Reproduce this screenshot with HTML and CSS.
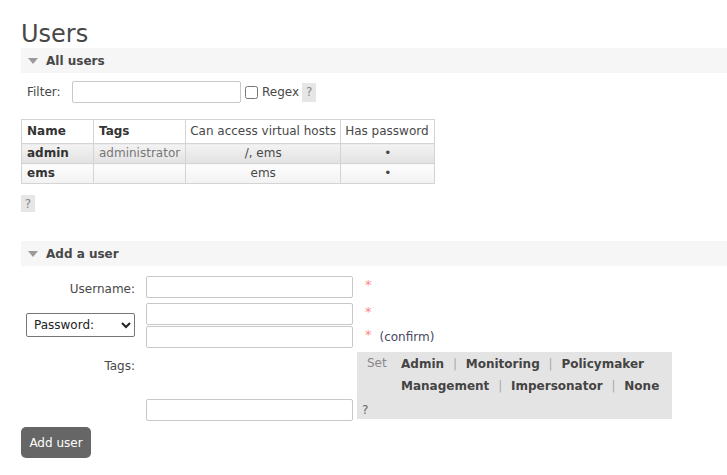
FILE: index.html
```html
<!DOCTYPE html>
<html>
<head>
<meta charset="utf-8">
<link rel="stylesheet" href="styles.css">
</head>
<body>
<div class="main">
  <h1 class="title">Users</h1>

  <div class="section-bar"><span class="tri"></span><span class="section-title">All users</span></div>

  <div class="filter-row">
    <label class="filter-label">Filter:</label>
    <input class="text-input filter-input" type="text">
    <input class="check" type="checkbox">
    <span class="regex">Regex</span>
    <span class="help help-tall">?</span>
  </div>

  <table class="users">
    <thead>
      <tr>
        <th class="c-name">Name</th>
        <th class="c-tags">Tags</th>
        <th class="c-vh plain">Can access virtual hosts</th>
        <th class="c-pw plain">Has password</th>
      </tr>
    </thead>
    <tbody>
      <tr class="alt1">
        <td class="strong">admin</td>
        <td class="muted">administrator</td>
        <td class="center">/, ems</td>
        <td class="center">&#8226;</td>
      </tr>
      <tr class="alt2">
        <td class="strong">ems</td>
        <td></td>
        <td class="center">ems</td>
        <td class="center">&#8226;</td>
      </tr>
    </tbody>
  </table>

  <div class="help-row"><span class="help help-small">?</span></div>

  <div class="section-bar add-bar"><span class="tri"></span><span class="section-title">Add a user</span></div>

  <form class="user-form">
    <label class="f-label user-label">Username:</label>
    <div class="f-field"><input class="text-input field-input" type="text"><span class="mand">*</span></div>

    <div class="f-label pw-label">
      <select class="pw-select"><option>Password:</option><option>No password</option></select>
    </div>
    <div class="f-field pw-fields">
      <div class="pw-line"><input class="text-input field-input" type="password"><span class="mand">*</span></div>
      <div class="pw-line"><input class="text-input field-input" type="password"><span class="mand">*</span><span class="confirm">(confirm)</span></div>
    </div>

    <label class="f-label tags-label">Tags:</label>
    <div class="tags-cell">
      <div class="tag-box">
        <span class="set">Set</span>
        <div class="tag-links">
          <span class="tag-link">Admin</span> <span class="sep">|</span> <span class="tag-link">Monitoring</span> <span class="sep">|</span> <span class="tag-link">Policymaker</span><br>
          <span class="tag-link">Management</span> <span class="sep">|</span> <span class="tag-link">Impersonator</span> <span class="sep">|</span> <span class="tag-link">None</span>
        </div>
      </div>
      <input class="text-input field-input tags-input" type="text">
      <span class="tags-help">?</span>
    </div>
  </form>

  <button class="add-btn" type="button">Add user</button>
</div>
</body>
</html>
```

FILE: styles.css
```css
html, body {
  margin: 0;
  padding: 0;
  background: #fff;
}
body {
  font-family: "DejaVu Sans", Verdana, sans-serif;
  font-size: 12px;
  color: #484848;
}
.main {
  padding: 20px 0 0 21px;
}
.title {
  margin: 0;
  font-size: 24px;
  font-weight: normal;
  line-height: 28px;
  color: #484848;
}
.section-bar {
  height: 25px;
  background: #f6f6f6;
  display: flex;
  align-items: center;
}
.tri {
  width: 0;
  height: 0;
  margin-left: 7px;
  margin-right: 8px;
  border-left: 5px solid transparent;
  border-right: 5px solid transparent;
  border-top: 6px solid #9a9a9a;
}
.section-title {
  font-weight: bold;
  color: #484848;
}
.filter-row {
  display: flex;
  align-items: center;
  margin-top: 8px;
  height: 22px;
}
.filter-label {
  margin-left: 6px;
  width: 45px;
}
.text-input {
  box-sizing: border-box;
  height: 22px;
  border: 1px solid #c8c8c8;
  border-radius: 2px;
  background: #fff;
  padding: 0 3px;
  font-family: inherit;
  font-size: 12px;
  margin: 0;
}
.filter-input {
  width: 169px;
}
.check {
  width: 13px;
  height: 13px;
  margin: 0 4px 0 4px;
}
.regex {
  margin-right: 3px;
}
.help {
  background: #e6e6e6;
  color: #888;
  display: inline-flex;
  align-items: center;
  justify-content: center;
  width: 14px;
}
.help-tall {
  height: 19px;
}
.users {
  margin-top: 16px;
  border-collapse: collapse;
  border: 1px solid #d4d4d4;
  table-layout: fixed;
}
.users th, .users td {
  border: 1px solid #d4d4d4;
  line-height: 15px;
  text-align: left;
  white-space: nowrap;
}
.users th {
  padding: 4px 5px;
  font-weight: bold;
  background: #fff;
  color: #333;
}
.users th.plain {
  font-weight: normal;
  color: #484848;
}
.users td {
  padding: 2px 5px;
}
.c-name { width: 61px; }
.c-tags { width: 79px; }
.users th.c-vh, .users th.c-pw {
  padding-left: 4px;
  padding-right: 4px;
}
.users th.c-vh { width: 146px; }
.users th.c-pw { width: 85px; }
.users td.center {
  text-align: center;
}
.users td.strong {
  font-weight: bold;
  color: #333;
}
.users td.muted {
  color: #777;
}
.alt1 td {
  background: linear-gradient(#f3f3f3, #e2e2e2);
}
.alt2 td {
  background: linear-gradient(#fdfdfd, #f2f2f2);
}
.help-row {
  margin-top: 11px;
  height: 17px;
}
.help-small {
  height: 17px;
}
.add-bar {
  margin-top: 29px;
}
.user-form {
  display: grid;
  grid-template-columns: 114px 1fr;
  column-gap: 11px;
  row-gap: 5px;
  margin-top: 10px;
}
.f-label {
  justify-self: end;
  align-self: center;
}
.user-label {
  padding-top: 3px;
}
.f-field {
  display: flex;
  align-items: center;
}
.field-input {
  width: 207px;
}
.mand {
  color: #f88;
  margin-left: 12px;
  position: relative;
  top: -3px;
  font-size: 13px;
}
.confirm {
  margin-left: 8px;
  color: #484860;
}
.pw-fields {
  flex-direction: column;
  align-items: flex-start;
  gap: 1px;
}
.pw-line {
  display: flex;
  align-items: center;
}
.pw-select {
  width: 109px;
  height: 24px;
  font-family: inherit;
  font-size: 12px;
  color: #222;
  border: 1px solid #767676;
  border-radius: 2px;
  background: #fff;
  padding: 0 3px;
  margin: 0;
}
.pw-label {
  margin-top: -2px;
}
.tags-label {
  align-self: start;
  margin-top: 6px;
}
.tags-cell {
  display: grid;
  grid-template-columns: 211px 315px;
  grid-template-rows: auto auto;
  margin-top: -1px;
}
.tag-box {
  grid-column: 2;
  grid-row: 1 / span 2;
  background: #e4e4e4;
  height: 67px;
  box-sizing: border-box;
  padding: 4px 0 0 10px;
  display: flex;
  align-items: flex-start;
}
.set {
  color: #888;
  width: 34px;
  line-height: 14px;
}
.tag-links {
  width: 268px;
  line-height: 22px;
  margin-top: -3px;
}
.tag-link {
  font-weight: bold;
  color: #444;
}
.sep {
  color: #aaa;
  padding: 0 5px;
}
.tags-input {
  grid-column: 1;
  grid-row: 2;
  align-self: end;
  margin-bottom: -2px;
}
.tags-help {
  grid-column: 2;
  grid-row: 2;
  align-self: end;
  padding-left: 5px;
  color: #666;
  line-height: 18px;
}
.add-btn {
  margin-top: 8px;
  width: 70px;
  height: 31px;
  background: #666;
  color: #fff;
  border: none;
  border-radius: 5px;
  font-family: inherit;
  font-size: 12px;
  padding: 0;
}
```
